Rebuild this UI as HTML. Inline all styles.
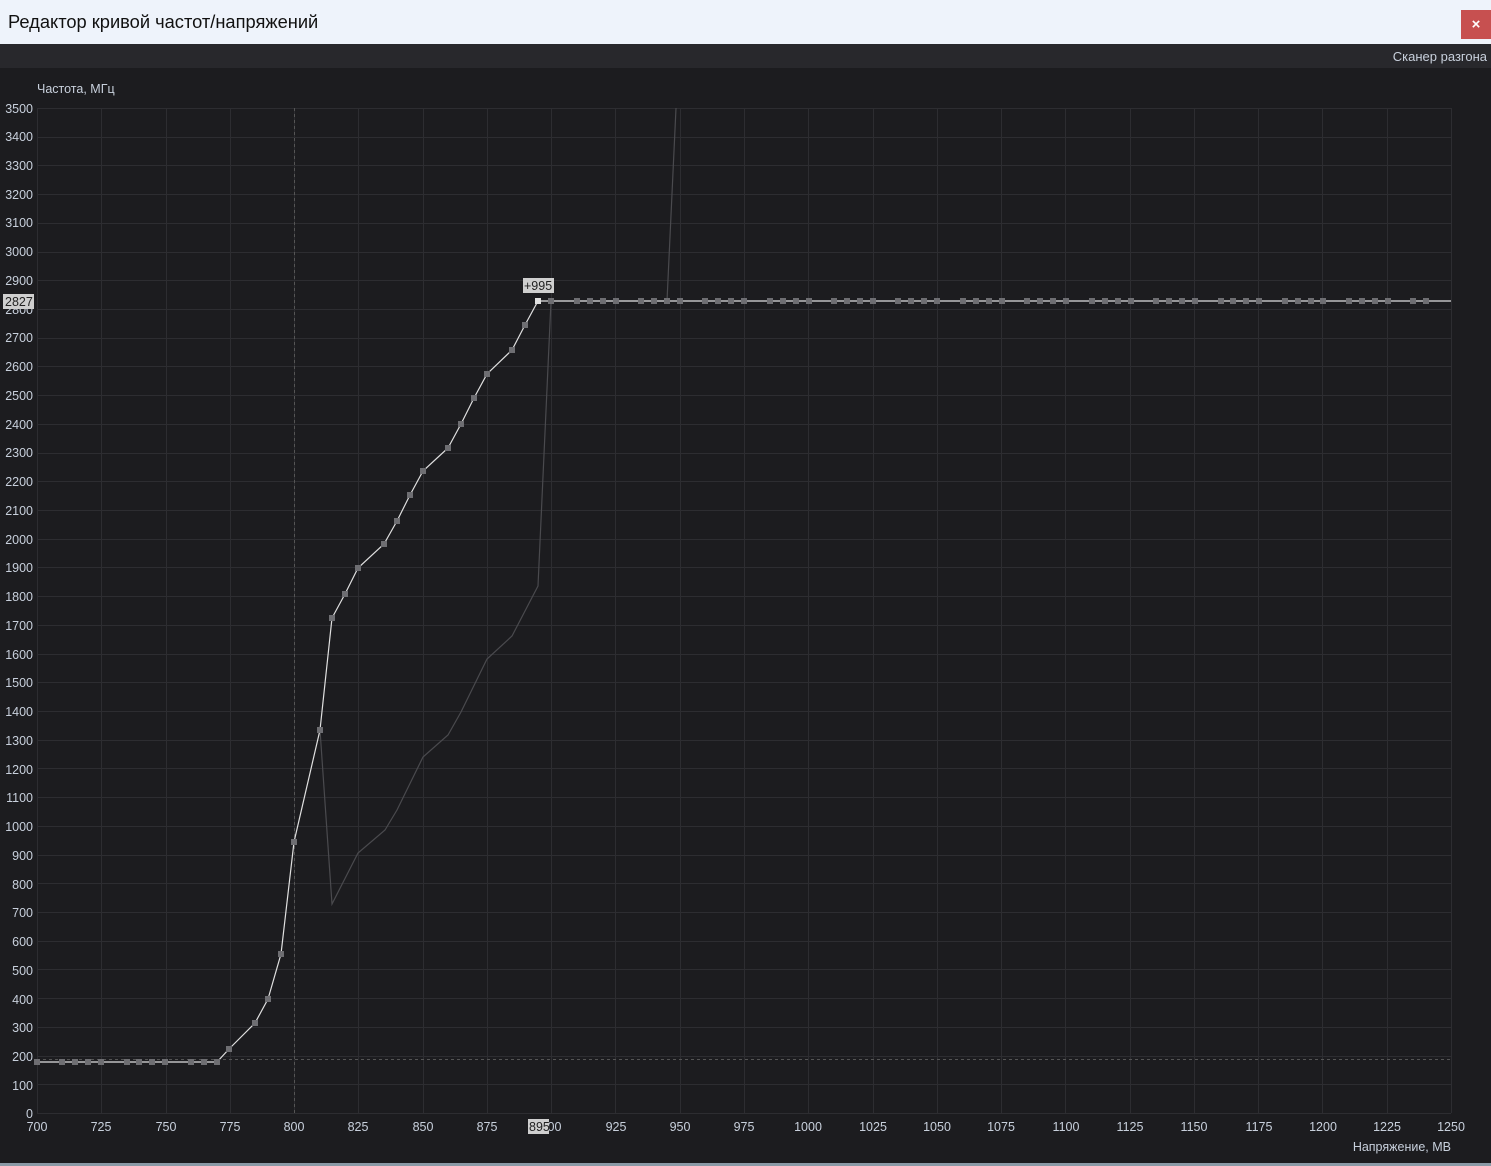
<!DOCTYPE html>
<html><head><meta charset="utf-8"><style>
html,body{margin:0;padding:0;width:1491px;height:1166px;overflow:hidden;background:#1c1c1f;font-family:"Liberation Sans",sans-serif}
#title{position:absolute;left:0;top:0;width:1491px;height:44px;background:#eef3fb}
#title span{position:absolute;left:8px;top:11px;font-size:18.3px;color:#111}
#close{position:absolute;left:1461px;top:10px;width:30px;height:29px;background:#c75050;color:#fff;font-weight:bold;font-size:15px;text-align:center;line-height:29px}
#bar{position:absolute;left:0;top:44px;width:1491px;height:24px;background:#28282c}
#bar span{position:absolute;right:4px;top:5px;font-size:13px;color:#c8d0dc}
svg{position:absolute;left:0;top:0}
svg text{font-family:"Liberation Sans",sans-serif;font-size:12.5px;fill:#c8d0dc}
#bot{position:absolute;left:0;top:1163px;width:1491px;height:3px;background:#8a9aa6}
</style></head><body>
<div id="title"><span>Редактор кривой частот/напряжений</span><div id="close">×</div></div>
<div id="bar"><span>Сканер разгона</span></div>
<svg width="1491" height="1166">
<g id="grid" stroke="#2d2d31" stroke-width="1"></g>
<line x1="294.5" y1="108" x2="294.5" y2="1113" stroke="#555" stroke-dasharray="3,3"/>
<line x1="37" y1="1059.5" x2="1451" y2="1059.5" stroke="#555" stroke-dasharray="3,3"/>
<polyline fill="none" stroke="#4a4a4e" stroke-width="1.2" points="320,730 332,904 358,853 385,830 397,810 423,757 448,735 461,712 487,659 512,636 538,586 551,301 667,301 676,108"/>
<polyline fill="none" stroke="#e0e0e0" stroke-width="1.2" points="37,1062 217,1062 229,1049 255,1023 268,999 281,954 294,842 320,730 332,618 345,594 358,568 384,544 397,521 410,495 423,471 448,448 461,424 474,398 487,374 512,350 525,325 538,301 1451,301"/>
<g id="sq" fill="#6e6e72"></g>
<rect x="535" y="298" width="6" height="6" fill="#e0e0e0"/>
<g id="yl" text-anchor="end">
<text x="33" y="1118">0</text><text x="33" y="1090">100</text><text x="33" y="1061">200</text><text x="33" y="1032">300</text><text x="33" y="1004">400</text><text x="33" y="975">500</text><text x="33" y="946">600</text><text x="33" y="917">700</text><text x="33" y="889">800</text><text x="33" y="860">900</text><text x="33" y="831">1000</text><text x="33" y="802">1100</text><text x="33" y="774">1200</text><text x="33" y="745">1300</text><text x="33" y="716">1400</text><text x="33" y="687">1500</text><text x="33" y="659">1600</text><text x="33" y="630">1700</text><text x="33" y="601">1800</text><text x="33" y="572">1900</text><text x="33" y="544">2000</text><text x="33" y="515">2100</text><text x="33" y="486">2200</text><text x="33" y="457">2300</text><text x="33" y="429">2400</text><text x="33" y="400">2500</text><text x="33" y="371">2600</text><text x="33" y="342">2700</text><text x="33" y="314">2800</text><text x="33" y="285">2900</text><text x="33" y="256">3000</text><text x="33" y="227">3100</text><text x="33" y="199">3200</text><text x="33" y="170">3300</text><text x="33" y="141">3400</text><text x="33" y="113">3500</text>
</g>
<g text-anchor="middle">
<text x="37" y="1131">700</text><text x="101" y="1131">725</text><text x="166" y="1131">750</text><text x="230" y="1131">775</text><text x="294" y="1131">800</text><text x="358" y="1131">825</text><text x="423" y="1131">850</text><text x="487" y="1131">875</text><text x="551" y="1131">900</text><text x="616" y="1131">925</text><text x="680" y="1131">950</text><text x="744" y="1131">975</text><text x="808" y="1131">1000</text><text x="873" y="1131">1025</text><text x="937" y="1131">1050</text><text x="1001" y="1131">1075</text><text x="1066" y="1131">1100</text><text x="1130" y="1131">1125</text><text x="1194" y="1131">1150</text><text x="1259" y="1131">1175</text><text x="1323" y="1131">1200</text><text x="1387" y="1131">1225</text><text x="1451" y="1131">1250</text>
</g>
<rect x="528" y="1119" width="21" height="15" fill="#cfcfcf"/><text x="529" y="1131" style="fill:#222">895</text>
<rect x="3" y="294" width="31" height="15" fill="#cfcfcf"/><text x="5" y="306" style="fill:#222">2827</text>
<rect x="523" y="278" width="31" height="15" fill="#cfcfcf"/><text x="524" y="290" style="fill:#222">+995</text>
<text x="37" y="93">Частота, МГц</text>
<text x="1451" y="1151" text-anchor="end">Напряжение, МВ</text>
</svg>
<div id="bot"></div>
<script>
var ns="http://www.w3.org/2000/svg",g=document.getElementById("grid"),s=document.getElementById("sq");
function L(a,b,c,d){var l=document.createElementNS(ns,"line");l.setAttribute("x1",a);l.setAttribute("y1",b);l.setAttribute("x2",c);l.setAttribute("y2",d);g.appendChild(l);}
for(var k=0;k<=35;k++){var y=Math.round(1113-k*28.714)+.5;L(37,y,1451,y);}
for(var k=0;k<=22;k++){var x=Math.round(37+k*64.27)+.5;L(x,108,x,1113);}
function S(x,y){var r=document.createElementNS(ns,"rect");r.setAttribute("x",x-3);r.setAttribute("y",y-3);r.setAttribute("width",6);r.setAttribute("height",6);s.appendChild(r);}
[37,62,75,88,101,127,139,152,165,191,204,217].forEach(function(x){S(x,1062)});
[[229,1049],[255,1023],[268,999],[281,954],[294,842],[320,730],[332,618],[345,594],[358,568],[384,544],[397,521],[410,495],[423,471],[448,448],[461,424],[474,398],[487,374],[512,350],[525,325]].forEach(function(p){S(p[0],p[1])});
[551,577,590,603,616,641,654,667,680,705,718,731,744,770,783,796,809,834,847,860,873,898,911,924,937,963,976,989,1002,1027,1040,1053,1066,1092,1105,1118,1131,1156,1169,1182,1195,1221,1233,1246,1259,1285,1298,1311,1323,1349,1362,1375,1388,1413,1426].forEach(function(x){S(x,301)});
</script>
</body></html>
